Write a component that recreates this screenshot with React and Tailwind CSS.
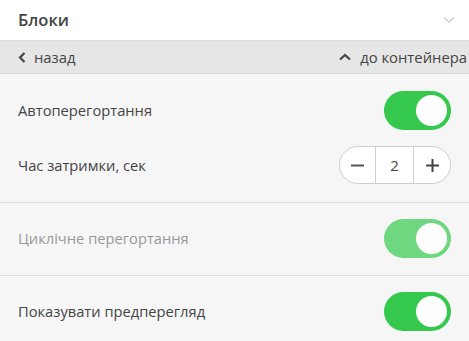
import React from "react";

function Toggle({ light }) {
  return (
    <div
      className={`flex h-[39px] w-[67px] items-center justify-end rounded-full pr-[4px] ${
        light ? "bg-[#70d781]" : "bg-[#34c84d]"
      }`}
    >
      <div className="h-[31px] w-[31px] rounded-full bg-white" />
    </div>
  );
}

function Stepper() {
  return (
    <div className="flex h-[38px] w-[112px] items-stretch overflow-hidden rounded-full border border-[#cfcfcf] bg-white text-[#444]">
      <div className="flex w-[36px] items-center justify-center border-r border-[#cfcfcf]">
        <svg width="13" height="13" viewBox="0 0 13 13">
          <rect x="0" y="5.5" width="13" height="2" fill="#555" />
        </svg>
      </div>
      <div className="flex w-[38px] items-center justify-center border-r border-[#cfcfcf] text-[15px]">
        2
      </div>
      <div className="flex flex-1 items-center justify-center">
        <svg width="13" height="13" viewBox="0 0 13 13">
          <rect x="0" y="5.5" width="13" height="2" fill="#444" />
          <rect x="5.5" y="0" width="2" height="13" fill="#444" />
        </svg>
      </div>
    </div>
  );
}

export default function App() {
  return (
    <div
      className="w-[469px] h-[341px] overflow-hidden bg-[#f6f6f6] text-[#444]"
      style={{ fontFamily: '"Open Sans", "Noto Sans", sans-serif' }}
    >
      <div className="flex h-[41px] items-center justify-between border-b border-[#dcdcdc] bg-white pl-[18px] pr-[14px]">
        <span className="text-[16.5px] font-semibold text-[#444]">Блоки</span>
        <svg width="12" height="8" viewBox="0 0 12 8">
          <path d="M1 1.5 L6 6 L11 1.5" fill="none" stroke="#cfcfcf" strokeWidth="1.5" />
        </svg>
      </div>
      <div className="flex h-[33px] items-center justify-between border-b border-[#dadada] bg-[#e6e6e6] pl-[18px] pr-[2px] text-[14.8px] text-[#444]">
        <div className="flex items-center gap-[8px]">
          <svg width="8" height="11" viewBox="0 0 8 11">
            <path d="M6.5 1 L2 5.5 L6.5 10" fill="none" stroke="#444" strokeWidth="2.2" />
          </svg>
          <span>назад</span>
        </div>
        <div className="flex items-center gap-[9px]">
          <svg width="12" height="8" viewBox="0 0 12 8">
            <path d="M1 6.5 L6 2 L11 6.5" fill="none" stroke="#444" strokeWidth="2.2" />
          </svg>
          <span>до контейнера</span>
        </div>
      </div>

      <div className="flex flex-col gap-[16px] pl-[18px] pr-[18px] pt-[17px] pb-[18px]">
        <div className="flex items-center justify-between">
          <span className="text-[14.7px]">Автоперегортання</span>
          <Toggle />
        </div>
        <div className="flex items-center justify-between">
          <span className="text-[14.7px]">Час затримки, сек</span>
          <Stepper />
        </div>
      </div>
      <div className="h-px bg-[#dcdcdc]" />
      <div className="flex items-center justify-between pl-[18px] pr-[18px] pt-[16px] pb-[17px]">
        <span className="text-[14.7px] text-[#999]">Циклічне перегортання</span>
        <Toggle light />
      </div>
      <div className="h-px bg-[#dcdcdc]" />
      <div className="flex items-center justify-between pl-[18px] pr-[18px] pt-[16px] pb-[17px]">
        <span className="text-[14.7px]">Показувати предперегляд</span>
        <Toggle />
      </div>
    </div>
  );
}
